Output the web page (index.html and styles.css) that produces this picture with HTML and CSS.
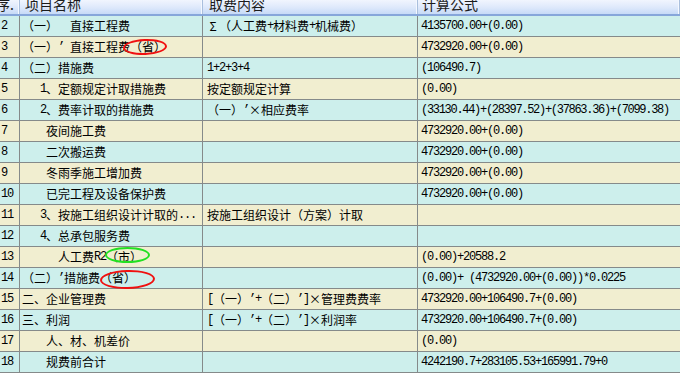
FILE: index.html
```html
<!DOCTYPE html>
<html lang="zh-CN">
<head>
<meta charset="utf-8">
<title>取费表</title>
<link rel="stylesheet" href="styles.css">
</head>
<body>
<div class="sheet">
  <div class="hrow">
    <div class="hc hnum"><span>序.</span></div>
    <div class="hc hname"><span>项目名称</span></div>
    <div class="hc hbase"><span>取费内容</span></div>
    <div class="hc hcalc"><span>计算公式</span></div>
  </div>

  <div class="row cy">
    <div class="cell no a">2</div>
    <div class="cell name">（一）<span class="a">  </span>直接工程费</div>
    <div class="cell base"><span class="fw">Σ</span>（人工费<span class="a">+</span>材料费<span class="a">+</span>机械费）</div>
    <div class="cell calc a">4135700.00+(0.00)</div>
  </div>
  <div class="row bg">
    <div class="cell no a">3</div>
    <div class="cell name">（一）<span class="a">’ </span>直接工程费<span class="mark"><span>（省）</span><i class="ring red r3"></i></span></div>
    <div class="cell base"></div>
    <div class="cell calc a">4732920.00+(0.00)</div>
  </div>
  <div class="row cy">
    <div class="cell no a">4</div>
    <div class="cell name">（二）措施费</div>
    <div class="cell base a">1+2+3+4</div>
    <div class="cell calc a">(106490.7)</div>
  </div>
  <div class="row bg">
    <div class="cell no a">5</div>
    <div class="cell name"><span class="a">   1</span>、定额规定计取措施费</div>
    <div class="cell base">按定额规定计算</div>
    <div class="cell calc a">(0.00)</div>
  </div>
  <div class="row cy">
    <div class="cell no a">6</div>
    <div class="cell name"><span class="a">   2</span>、费率计取的措施费</div>
    <div class="cell base">（一）<span class="a">’</span><span class="fw">×</span>相应费率</div>
    <div class="cell calc a tight">(33130.44)+(28397.52)+(37863.36)+(7099.38)</div>
  </div>
  <div class="row bg">
    <div class="cell no a">7</div>
    <div class="cell name"><span class="a">    </span>夜间施工费</div>
    <div class="cell base"></div>
    <div class="cell calc a">4732920.00+(0.00)</div>
  </div>
  <div class="row cy">
    <div class="cell no a">8</div>
    <div class="cell name"><span class="a">    </span>二次搬运费</div>
    <div class="cell base"></div>
    <div class="cell calc a">4732920.00+(0.00)</div>
  </div>
  <div class="row bg">
    <div class="cell no a">9</div>
    <div class="cell name"><span class="a">    </span>冬雨季施工增加费</div>
    <div class="cell base"></div>
    <div class="cell calc a">4732920.00+(0.00)</div>
  </div>
  <div class="row cy">
    <div class="cell no a">10</div>
    <div class="cell name"><span class="a">    </span>已完工程及设备保护费</div>
    <div class="cell base"></div>
    <div class="cell calc a">4732920.00+(0.00)</div>
  </div>
  <div class="row bg">
    <div class="cell no a">11</div>
    <div class="cell name"><span class="a">   3</span>、按施工组织设计计取的<span class="a">...</span></div>
    <div class="cell base">按施工组织设计（方案）计取</div>
    <div class="cell calc a"></div>
  </div>
  <div class="row cy">
    <div class="cell no a">12</div>
    <div class="cell name"><span class="a">   4</span>、总承包服务费</div>
    <div class="cell base"></div>
    <div class="cell calc a"></div>
  </div>
  <div class="row bg">
    <div class="cell no a">13</div>
    <div class="cell name"><span class="a">      </span>人工费<span class="a">R2</span><span class="mark"><span>（市）</span><i class="ring green r13"></i></span></div>
    <div class="cell base"></div>
    <div class="cell calc a">(0.00)+20588.2</div>
  </div>
  <div class="row cy">
    <div class="cell no a">14</div>
    <div class="cell name">（二）<span class="a">’</span>措施费<span class="mark"><span>（省）</span><i class="ring red r14"></i></span></div>
    <div class="cell base"></div>
    <div class="cell calc a">(0.00)+ (4732920.00+(0.00))*0.0225</div>
  </div>
  <div class="row bg">
    <div class="cell no a">15</div>
    <div class="cell name">二、企业管理费</div>
    <div class="cell base"><span class="a">[</span>（一）<span class="a">’+</span>（二）<span class="a">’]</span><span class="fw">×</span>管理费费率</div>
    <div class="cell calc a">4732920.00+106490.7+(0.00)</div>
  </div>
  <div class="row cy">
    <div class="cell no a">16</div>
    <div class="cell name">三、利润</div>
    <div class="cell base"><span class="a">[</span>（一）<span class="a">’+</span>（二）<span class="a">’]</span><span class="fw">×</span>利润率</div>
    <div class="cell calc a">4732920.00+106490.7+(0.00)</div>
  </div>
  <div class="row bg">
    <div class="cell no a">17</div>
    <div class="cell name"><span class="a">    </span>人、材、机差价</div>
    <div class="cell base"></div>
    <div class="cell calc a">(0.00)</div>
  </div>
  <div class="row cy">
    <div class="cell no a">18</div>
    <div class="cell name"><span class="a">    </span>规费前合计</div>
    <div class="cell base"></div>
    <div class="cell calc a">4242190.7+283105.53+165991.79+0</div>
  </div>
</div>
</body>
</html>
```

FILE: styles.css
```css
html, body {
  margin: 0;
  padding: 0;
  background: #ffffff;
}

.sheet {
  width: 680px;
  font-family: "Noto Sans CJK SC", "Noto Sans", sans-serif;
  font-size: 12px;
  color: #000;
}

.hrow,
.row {
  display: grid;
  grid-template-columns: 20px 183px 215px 1fr;
  box-sizing: border-box;
}

.hrow {
  height: 16px;
  border-bottom: 2px solid #86a6da;
  background: linear-gradient(to bottom, #f1f5fe 0%, #dde8fb 55%, #c6daf7 100%);
}

.hc {
  box-sizing: border-box;
  overflow: hidden;
  border-right: 1px solid #aabfdd;
  box-shadow: inset -1px 0 0 #f4f8ff;
  font-size: 14px;
  line-height: 16px;
  color: #1c1c1c;
  white-space: nowrap;
}

.hc span {
  display: block;
  margin-top: -4px;
}

.hnum span {
  margin-left: -4px;
}

.hname span { padding-left: 5px; }
.hbase span { padding-left: 6px; }
.hcalc span { padding-left: 4px; }

.row {
  height: 21px;
  border-bottom: 1px solid #858a8a;
}

.row.cy { background: #cdefec; }
.row.bg { background: #f1eed0; }

.cell {
  box-sizing: border-box;
  border-right: 1px solid #858a8a;
  display: flex;
  align-items: center;
  white-space: pre;
  line-height: 20px;
  overflow: visible;
}

.cell.calc { border-right: none; }

.cell.no { padding-left: 1px; }
.cell.name { padding-left: 2px; }
.cell.base { padding-left: 4px; }
.cell.calc { padding-left: 3px; }

.a {
  font-family: "Liberation Mono", "DejaVu Sans Mono", monospace;
  font-size: 12px;
  letter-spacing: -1.2px;
}

.a.tight {
  letter-spacing: -1.3px;
}

.fw {
  display: inline-block;
  width: 12px;
  text-align: center;
}

.mark {
  position: relative;
  display: inline-block;
  height: 20px;
}

.ring {
  position: absolute;
  box-sizing: border-box;
  border-radius: 50%;
  border: 2px solid #f01010;
}

.ring.green { border-color: #22e022; }

.r3 {
  left: -7px;
  top: 2px;
  width: 44px;
  height: 16px;
  transform: rotate(-2deg);
}

.r13 {
  left: -1px;
  top: 0;
  width: 45px;
  height: 16px;
}

.r14 {
  left: 0;
  top: 2px;
  width: 55px;
  height: 19px;
  transform: rotate(-1.5deg);
}
```
